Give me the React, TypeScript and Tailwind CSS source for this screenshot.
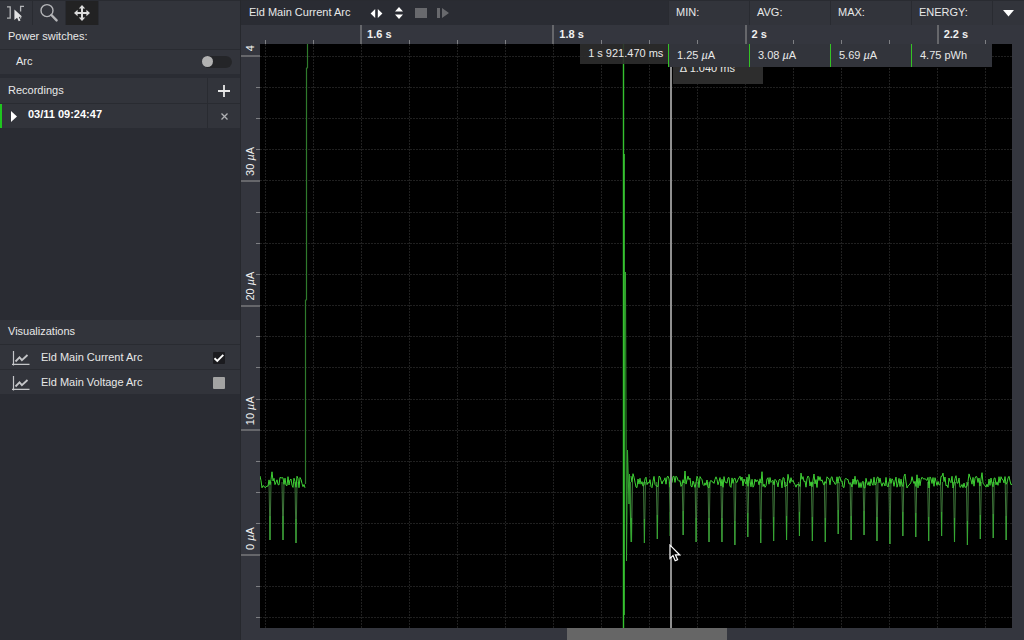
import { useState } from "react";
import type { ReactNode } from "react";
import clsx from "clsx";

const PLOT_W = 752;
const PLOT_H = 584;
const BASELINE = 438;

const TIME_TICKS = Array.from({ length: 16 }, (_, i) => ({
  at: ((5 + i * 48.05) / PLOT_W) * 100,
  label: ({ 2: "1.6 s", 6: "1.8 s", 10: "2 s", 14: "2.2 s" } as Record<number, string>)[i],
}));

// The topmost label has room for its first digit only
const CURRENT_LABELS: Record<number, string> = { 0: "4", 4: "30", 8: "20", 12: "10", 16: "0" };

const CURRENT_TICKS = Array.from({ length: 19 }, (_, i) => ({
  at: ((12.2 + i * 31.17) / PLOT_H) * 100,
  value: CURRENT_LABELS[i],
  unit: i > 0,
}));

// Sleep current dips: [x, bottom]
const DIPS_BEFORE = [[10, 496], [23, 496], [36, 499]];
const DIP_BOTTOMS = [
  498, 499, 495, 492, 491, 498, 498, 498, 501, 493, 499, 497, 496, 492, 497,
  498, 490, 496, 491, 497, 500, 492, 493, 497, 492, 498, 501, 495, 494, 496,
];
const DIPS_AFTER = DIP_BOTTOMS.map((y, i) => [371.5 + i * 12.92, y]);

function noise(from: number, to: number, dips: number[][], seed: number) {
  let s = seed;
  const points: string[] = [];
  for (let x = from; x <= to; x += 1) {
    s = (s * 16807) % 2147483647;
    const r = s / 2147483647 - 0.5;
    const peak = dips.some(([d]) => x - d > 1.2 && x - d <= 2.2) ? 5 : 0;
    points.push(`${x},${(BASELINE + r * 12 - peak).toFixed(1)}`);
  }
  return points.join(" ");
}

function dipPath(dips: number[][]) {
  return dips
    .map(([x, y]) => `M${x - 1} ${BASELINE}L${x - 0.5} ${y - 30}L${x} ${y}L${x + 0.5} ${y - 30}L${x + 1} ${BASELINE}`)
    .join("");
}

function dipTips(dips: number[][]) {
  return dips.map(([x, y]) => `M${x} ${y - 24}V${y}`).join("");
}

function ToolButton({ label, active, children }: { label: string; active?: boolean; children: ReactNode }) {
  return (
    <button
      type="button"
      aria-label={label}
      className={clsx(
        "flex h-full w-[33px] items-center justify-center border-r border-[#292b31]",
        active && "bg-[#222223]"
      )}
    >
      {children}
    </button>
  );
}

function Toolbar() {
  return (
    <div className="flex h-[25px] border-t border-[#292b31] bg-[#32343b]">
      <ToolButton label="Select">
        <svg width="18" height="18" viewBox="0 0 18 18" fill="none" stroke="#b4b5b8" strokeWidth="1.3">
          <path d="M0 2.8h3.2v11.4H0M17 2.3h-3.4v5.2M13.6 12.5v2" />
          <path d="M7.4 5.6l7.6 7-3.2.3 1.7 3.6-1.8.8-1.6-3.6-2.7 2.4z" fill="#e2e2e3" stroke="none" />
        </svg>
      </ToolButton>
      <ToolButton label="Zoom">
        <svg width="20" height="20" viewBox="0 0 20 20" fill="none" stroke="#b4b5b8">
          <circle cx="8" cy="7.6" r="6" strokeWidth="1.4" />
          <path d="M12.4 12L17.6 17.4" strokeWidth="2.4" strokeLinecap="round" />
        </svg>
      </ToolButton>
      <ToolButton label="Move" active>
        <svg width="16" height="16" viewBox="0 0 16 16" fill="#dcdcdc">
          <path d="M7 2h2v12H7zM2 7h12v2H2z" />
          <path d="M8 0l3.2 3.6H4.8zM8 16l3.2-3.6H4.8zM0 8l3.6-3.2v6.4zM16 8l-3.6-3.2v6.4z" />
        </svg>
      </ToolButton>
    </div>
  );
}

function VisualizationRow({ name, defaultChecked }: { name: string; defaultChecked?: boolean }) {
  return (
    <label className="flex h-[25px] items-center border-t border-[#292b31] bg-[#32343b] pr-[15px] pl-3">
      <svg width="18" height="15" viewBox="0 0 18 15" className="mt-0.5" fill="none" stroke="#c4c5c8">
        <path d="M1.5 0v14.5M0 13.4h17.5" strokeWidth="1.2" />
        <path d="M3.5 10.5L7.5 6.4l2.4 2.8L15.5 4" strokeWidth="1.8" />
      </svg>
      <span className="ml-[11px] flex-1">{name}</span>
      <span className="relative mt-0.5 size-3">
        <input
          type="checkbox"
          defaultChecked={defaultChecked}
          className="peer block size-3 appearance-none rounded-[1px] bg-[#a3a3a3] checked:bg-[#1b1b1f]"
        />
        <svg
          viewBox="0 0 12 12"
          className="pointer-events-none absolute inset-0 hidden peer-checked:block"
          fill="none"
          stroke="#fff"
          strokeWidth="1.9"
        >
          <path d="M1.5 6.2l2.8 2.7 6-6" />
        </svg>
      </span>
    </label>
  );
}

function Sidebar() {
  return (
    <aside className="flex w-60 shrink-0 flex-col">
      <Toolbar />
      <section className="mb-1">
        <h2 className="h-6 bg-[#32343b] px-2 leading-[22px]">Power switches:</h2>
        <label className="flex h-[25px] items-center justify-between border-t border-[#292b31] bg-[#32343b] pr-2 pl-4">
          <span className="pb-0.5">Arc</span>
          <input
            type="checkbox"
            role="switch"
            className="h-3 w-[30px] appearance-none rounded-full bg-[linear-gradient(#242528,#242528)] [background-size:26px_12px] bg-right bg-no-repeat before:block before:size-[11px] before:rounded-full before:bg-[#b2b2b2] checked:before:ml-[19px]"
          />
        </label>
      </section>

      <section className="h-[242px]">
        <div className="flex h-[25px] bg-[#32343b]">
          <h2 className="flex-1 px-2 leading-6">Recordings</h2>
          <button
            type="button"
            aria-label="New recording"
            className="flex w-[33px] items-center justify-center border-l border-[#292b31]"
          >
            <svg width="12" height="12" viewBox="0 0 12 12" stroke="#e8e8e8" strokeWidth="1.8">
              <path d="M6 0v12M0 6h12" />
            </svg>
          </button>
        </div>
        <div className="flex h-[25px] border-t border-[#292b31] bg-[#32343b]">
          <button
            type="button"
            className="flex flex-1 items-center border-l-2 border-[#1fc61f] pl-[9px] font-bold text-white"
          >
            <svg width="6" height="11" viewBox="0 0 6 11" fill="#fff">
              <path d="M0 0l6 5.5L0 11z" />
            </svg>
            <span className="ml-[11px] pb-1">03/11 09:24:47</span>
          </button>
          <button
            type="button"
            aria-label="Remove recording"
            className="flex w-[33px] items-center justify-center border-l border-[#292b31]"
          >
            <svg width="7" height="7" viewBox="0 0 7 7" stroke="#b0b1b4" strokeWidth="1.3">
              <path d="M.5.5l6 6M6.5.5l-6 6" />
            </svg>
          </button>
        </div>
      </section>

      <section>
        <h2 className="h-6 bg-[#32343b] px-2 leading-[22px]">Visualizations</h2>
        <VisualizationRow name="Eld Main Current Arc" defaultChecked />
        <VisualizationRow name="Eld Main Voltage Arc" />
      </section>
    </aside>
  );
}

function ChartHeader({ open, onToggle }: { open: boolean; onToggle: () => void }) {
  return (
    <header className="flex h-[25px] border-t border-[#292b31]">
      <h1 className="pr-5 pl-2 leading-[23px]">Eld Main Current Arc</h1>
      <div className="flex flex-1 items-center gap-3">
        <button type="button" aria-label="Fit width">
          <svg width="13" height="9" viewBox="0 0 13 9" fill="#fff">
            <path d="M5.2 0v9L.6 4.5zM7.8 0v9l4.6-4.5z" />
          </svg>
        </button>
        <button type="button" aria-label="Fit height">
          <svg width="8" height="12" viewBox="0 0 8 12" fill="#fff">
            <path d="M0 4.6h8L4 0zM0 7.4h8L4 12z" />
          </svg>
        </button>
        <button type="button" aria-label="Stop" disabled>
          <svg width="12" height="10" viewBox="0 0 12 10" fill="#68696d">
            <path d="M0 0h12v10H0z" />
          </svg>
        </button>
        <button type="button" aria-label="Step" disabled className="-ml-0.5">
          <svg width="12" height="10" viewBox="0 0 12 10" fill="#68696d">
            <path d="M0 0h3v10H0zM5 0l7 5-7 5z" />
          </svg>
        </button>
      </div>
      {["MIN:", "AVG:", "MAX:", "ENERGY:"].map((name) => (
        <div key={name} className="w-[81px] border-l border-[#292b31] bg-[#32343b] pl-[7px] leading-[23px]">
          {name}
        </div>
      ))}
      <button
        type="button"
        aria-label="Toggle statistics"
        aria-expanded={open}
        onClick={onToggle}
        className="flex w-8 items-center justify-center border-l border-[#292b31] bg-[#32343b]"
      >
        <svg width="11" height="7" viewBox="0 0 11 7" fill="#fff">
          <path d="M0 0h11L5.5 6.5z" />
        </svg>
      </button>
    </header>
  );
}

function TimeRuler() {
  return (
    <svg className="h-full w-full overflow-visible" shapeRendering="crispEdges">
      {TIME_TICKS.map(({ at, label }) => (
        <g key={at}>
          <line
            x1={`${at}%`}
            x2={`${at}%`}
            y1={label ? 0 : 15}
            y2="19"
            stroke={label ? "#66676b" : "#7e7f83"}
            strokeWidth={label ? 2 : 1}
          />
          {label && (
            <text x={`${at}%`} dx="6" y="13" fill="#f0f0f0" className="text-[11px] font-bold">
              {label}
            </text>
          )}
        </g>
      ))}
    </svg>
  );
}

function CurrentRuler() {
  return (
    <svg className="h-full w-full" shapeRendering="crispEdges">
      {CURRENT_TICKS.map(({ at, value, unit }) => (
        <g key={at}>
          <line
            x1={value ? 0 : 15}
            x2="19"
            y1={`${at}%`}
            y2={`${at}%`}
            stroke={value ? "#66676b" : "#7e7f83"}
            strokeWidth={value ? 2 : 1}
          />
          {value && (
            <svg y={`${at}%`} overflow="visible">
              <text transform="translate(13 -5) rotate(-90)" fill="#f0f0f0" className="text-[11px]">
                {value}
                {unit && (
                  <>
                    {" "}
                    <tspan className="italic">µ</tspan>A
                  </>
                )}
              </text>
            </svg>
          )}
        </g>
      ))}
    </svg>
  );
}

function Trace() {
  return (
    <svg
      viewBox={`0 0 ${PLOT_W} ${PLOT_H}`}
      width="100%"
      height="100%"
      preserveAspectRatio="none"
      fill="none"
      strokeLinejoin="bevel"
    >
      <path d={dipPath(DIPS_BEFORE) + dipPath(DIPS_AFTER)} stroke="#44823f" strokeWidth="0.9" />
      <path d={dipTips(DIPS_BEFORE) + dipTips(DIPS_AFTER)} stroke="#35a832" strokeWidth="1.1" />
      <polyline points={noise(0, 45, DIPS_BEFORE, 41)} stroke="#3fd235" strokeWidth="1" />
      <polyline points={noise(371, 752, DIPS_AFTER, 977)} stroke="#3fd235" strokeWidth="1" />
      {/* wake-up edge */}
      <path d="M45.5 440V256H46.5V24H47.5V0" stroke="#2f7a2c" strokeWidth="1.2" />
      {/* transmit burst */}
      <path d="M363.5 0V584" stroke="#35c22f" strokeWidth="1.4" />
      <path d="M364.5 110V571" stroke="#2fa32a" strokeWidth="1" />
      <path d="M365.5 228L366.5 517L367.5 406L369 460L369.5 430L371 498" stroke="#36a832" strokeWidth="1" />
    </svg>
  );
}

function Plot() {
  return (
    <svg className="block h-full w-full bg-black">
      <g stroke="#202020" strokeDasharray="2 1" shapeRendering="crispEdges">
        {TIME_TICKS.map(({ at }) => (
          <line key={at} x1={`${at}%`} x2={`${at}%`} y1="0" y2="100%" />
        ))}
        {CURRENT_TICKS.map(({ at }) => (
          <line key={at} x1="0" x2="100%" y1={`${at}%`} y2={`${at}%`} />
        ))}
      </g>
      <Trace />
    </svg>
  );
}

function Statistics() {
  const cell = "border-l border-[#34c424] pl-2 leading-[22px]";
  return (
    <div className="absolute top-0 right-5 grid h-[23px] grid-cols-[repeat(4,81px)] bg-[#32343b]">
      <div className={cell}>
        1.25 <i>µ</i>A
      </div>
      <div className={cell}>
        3.08 <i>µ</i>A
      </div>
      <div className={cell}>
        5.69 <i>µ</i>A
      </div>
      <div className={cell}>4.75 pWh</div>
    </div>
  );
}

function Pointer() {
  return (
    <svg
      width="12"
      height="18"
      viewBox="0 0 12 18"
      className="absolute top-[85.6%] left-[54.4%]"
      fill="#000"
      stroke="#fff"
      strokeWidth="1.2"
    >
      <path d="M1 1.2v13.2l3-2.8 2.2 5.2 2.4-1-2.2-5h4.2z" />
    </svg>
  );
}

export default function App() {
  const [showStats, setShowStats] = useState(true);

  return (
    <div className="flex h-screen overflow-hidden bg-[#2a2c33] font-['Liberation_Sans',Arial,sans-serif] text-[11px] text-[#e8e8e8]">
      <Sidebar />
      <main className="flex min-w-0 flex-1 flex-col border-l border-[#26282d]">
        <ChartHeader open={showStats} onToggle={() => setShowStats(!showStats)} />
        <div className="grid min-h-0 flex-1 grid-cols-[19px_minmax(0,1fr)_12px] grid-rows-[19px_minmax(0,1fr)_12px] bg-[#34363e]">
          <div className="col-start-2">
            <TimeRuler />
          </div>
          <div className="col-start-1 row-start-2">
            <CurrentRuler />
          </div>
          <div className="relative col-start-2 row-start-2 overflow-hidden">
            <Plot />
            <div className="absolute inset-y-0 left-[54.5%] w-0.5 bg-[#8f8f8f]" />
            <div className="absolute top-0 right-[45.7%] h-5 bg-[#2d2d2d]/90 pr-[5px] pl-2 leading-[19px] whitespace-nowrap">
              1 s 921.470 ms
            </div>
            <div className="absolute top-0 left-[54.9%] flex h-10 w-[90px] items-center bg-[#2d2d2d] pt-2 pl-[7px]">
              Δ 1.040 ms
            </div>
            {showStats && <Statistics />}
            <Pointer />
          </div>
          <div className="col-span-2 col-start-2 row-start-3">
            <div className="ml-[40.2%] h-full w-40 bg-[#666666]" />
          </div>
        </div>
      </main>
    </div>
  );
}
